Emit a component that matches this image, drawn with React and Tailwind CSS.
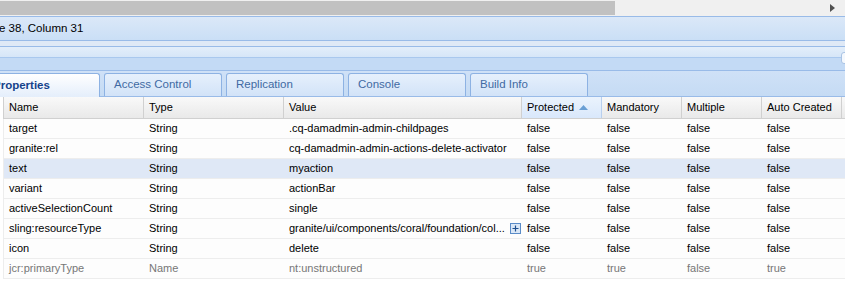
import React from 'react';

const cols = [
    { key: 'name', label: 'Name', w: 'w-[140px]' },
    { key: 'type', label: 'Type', w: 'w-[140px]' },
    { key: 'value', label: 'Value', w: 'w-[238px]' },
    { key: 'prot', label: 'Protected', w: 'w-[80px]' },
    { key: 'mand', label: 'Mandatory', w: 'w-[80px]' },
    { key: 'mult', label: 'Multiple', w: 'w-[80px]' },
    { key: 'auto', label: 'Auto Created', w: 'w-[80px]' },
];

const rows = [
    ['target', 'String', '.cq-damadmin-admin-childpages', 'false', 'false', 'false', 'false'],
    ['granite:rel', 'String', 'cq-damadmin-admin-actions-delete-activator', 'false', 'false', 'false', 'false'],
    ['text', 'String', 'myaction', 'false', 'false', 'false', 'false'],
    ['variant', 'String', 'actionBar', 'false', 'false', 'false', 'false'],
    ['activeSelectionCount', 'String', 'single', 'false', 'false', 'false', 'false'],
    ['sling:resourceType', 'String', 'granite/ui/components/coral/foundation/col...', 'false', 'false', 'false', 'false'],
    ['icon', 'String', 'delete', 'false', 'false', 'false', 'false'],
    ['jcr:primaryType', 'Name', 'nt:unstructured', 'true', 'true', 'false', 'true'],
];

const tabs = ['Access Control', 'Replication', 'Console', 'Build Info'];

const PlusIcon = () => (
    <svg width="11" height="11" viewBox="0 0 11 11" className="shrink-0">
        <rect x="0.5" y="0.5" width="10" height="10" fill="#dbe8f7" stroke="#5b8cc8" />
        <path d="M2.5 5.5h6M5.5 2.5v6" stroke="#1f4f8f" strokeWidth="1.2" />
    </svg>
);

const App = () => {
    return (
        <div className="w-[845px] h-[286px] bg-white overflow-hidden text-[11px] text-black" style={{ fontFamily: '"Liberation Sans", Arial, sans-serif' }}>
            {/* horizontal scrollbar */}
            <div className="h-[16px] bg-[#f0f0f0] flex items-center">
                <div className="w-[615px] h-[14px] bg-[#c1c1c1]" />
                <div className="flex-1" />
                <svg width="5" height="8" viewBox="0 0 5 8" className="mr-[10px]">
                    <path d="M0 0l5 4-5 4z" fill="#505050" />
                </svg>
            </div>

            {/* status bar */}
            <div className="h-[25px] border-t border-b border-[#99bbe8] bg-gradient-to-b from-[#dbe8f8] to-[#cadff6] flex items-center pt-[1px]">
                <span className="whitespace-nowrap text-[11.5px] -ml-[1px]">e 38, Column 31</span>
            </div>

            {/* toolbar */}
            <div className="h-[5px] bg-[#dfe9f6]" />
            <div className="h-[25px] border-t border-b border-[#99bbe8] flex flex-col">
                <div className="h-[10px] bg-gradient-to-b from-[#e3eefa] to-[#d6e6f8]" />
                <div className="flex-1 bg-[#c3daf5] border-t border-[#a9c8ee] relative">
                    <div className="absolute right-[-6px] top-[-6px] w-[10px] h-[12px] rounded-[3px] border border-[#a9c3e4] bg-[#f4f8fd]" />
                </div>
            </div>

            {/* tab strip */}
            <div className="h-[26px] bg-gradient-to-b from-[#cfe1f7] to-[#c5dbf4] border-b border-[#99bbe8] flex items-end gap-[4px] -ml-[20px]">
                <div className="w-[120px] h-[24px] border border-b-0 border-[#8db2e3] rounded-t-[3px] bg-gradient-to-b from-[#ffffff] to-[#e4eefb] flex items-center pl-[12px] font-bold text-[11.5px] text-[#15428b] -mb-[1px]">
                    Properties
                </div>
                {tabs.map(t => (
                    <div key={t} className="w-[118px] h-[23px] border border-b-0 border-[#8db2e3] rounded-t-[3px] bg-gradient-to-b from-[#e6f0fc] to-[#d2e3f8] flex items-center pl-[9px] text-[11.5px] text-[#416aa3]">
                        {t}
                    </div>
                ))}
            </div>

            {/* grid */}
            <div className="pl-[3px]">
                <div className="flex h-[22px] border-b border-[#d0d0d0] bg-gradient-to-b from-[#f9f9f9] to-[#e9e9e9] border-l border-[#d0d0d0]">
                    {cols.map(c => (
                        <div key={c.key} className={`${c.w} shrink-0 flex items-center pl-[5px] border-r ${c.key === 'prot' ? 'bg-gradient-to-b from-[#ebf3fd] to-[#d9e8fb] border-[#b8cfee]' : 'border-[#d0d0d0]'}`}>
                            {c.label}
                            {c.key === 'prot' && (
                                <svg width="9" height="5" viewBox="0 0 9 5" className="ml-[5px]">
                                    <path d="M0 5L4.5 0L9 5z" fill="#6a9fd4" />
                                </svg>
                            )}
                        </div>
                    ))}
                </div>
                {rows.map((r, i) => (
                    <div key={i} className={`flex h-[20px] border-b border-l border-[#ededed] ${i === 2 ? 'bg-[#dfe8f6]' : 'bg-[#fdfdfd]'} ${i === 7 ? 'text-[#777777]' : ''}`}>
                        {r.map((v, j) => (
                            <div key={j} className={`${cols[j].w} shrink-0 flex items-center pl-[5px] whitespace-nowrap overflow-hidden`}>
                                {j === 2 && i === 5 ? (
                                    <span className="flex flex-1 items-center justify-between pr-[1px]">{v}<PlusIcon /></span>
                                ) : v}
                            </div>
                        ))}
                    </div>
                ))}
            </div>
        </div>
    );
};

export default App;
